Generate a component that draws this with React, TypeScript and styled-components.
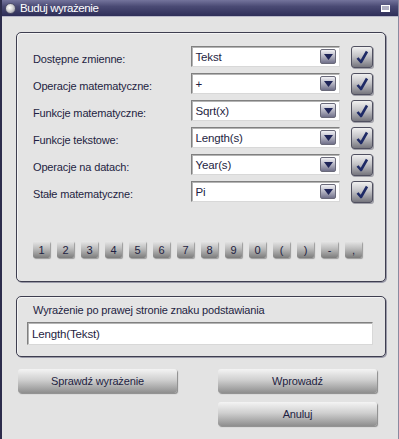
import React from 'react'
import styled, { createGlobalStyle } from 'styled-components'

const GlobalStyle = createGlobalStyle`
  html, body {
    margin: 0;
    padding: 0;
    background: #e3e3e3;
  }
  * {
    box-sizing: border-box;
  }
`

const WindowSC = styled.div`
  width: 399px;
  height: 439px;
  display: flex;
  flex-direction: column;
  background: #e3e3e3;
  border-left: 2px solid #2c2c4c;
  border-right: 1px solid #8a8aa0;
  font-family: 'Liberation Sans', Arial, sans-serif;
  font-size: 11px;
  letter-spacing: -0.15px;
  color: #1e1e42;
  overflow: hidden;
`

const TitleBar = styled.div`
  height: 17px;
  display: flex;
  align-items: center;
  padding: 0 8px 0 3px;
  background: linear-gradient(to bottom, #74749c 0%, #4a4a74 40%, #2e2e58 100%);
  border-bottom: 1px solid #b8b8c8;
  color: #ffffff;
  font-size: 11.5px;
  letter-spacing: -0.4px;
`

const TitleDot = styled.div`
  width: 11px;
  height: 11px;
  border-radius: 50%;
  margin-right: 4px;
  background: radial-gradient(circle at 40% 40%, #ffffff 0%, #d8d8d8 40%, #8a8a9a 100%);
  border: 1px solid #50506a;
`

const TitleText = styled.div`
  flex: 1;
`

const TitleBox = styled.div`
  width: 9px;
  height: 7px;
  border: 1px solid #ffffff;
  border-bottom-width: 2px;
  background: #b0b0c4;
`

const Body = styled.div`
  flex: 1;
  display: flex;
  flex-direction: column;
  padding: 15px 12px 0 14px;
`

const GroupBox = styled.div`
  width: 370px;
  border: 1px solid #3e3e50;
  border-radius: 5px;
  box-shadow: 1px 1px 0 #9a9aa8, inset 1px 1px 0 #f4f4f4;
  background: #e4e4e4;
`

const ExprGroup = styled(GroupBox)`
  margin-top: 14px;
  padding: 5px 12px 11px 10px;
`

const MainGroup = styled(GroupBox)`
  padding: 13px 12px 23px 16px;
`

const Rows = styled.div`
  display: flex;
  flex-direction: column;
  gap: 6px;
`

const Row = styled.div`
  display: flex;
  align-items: center;
  height: 21px;
`

const Label = styled.div`
  width: 158px;
  padding-top: 5px;
`

const Combo = styled.div`
  width: 150px;
  height: 21px;
  display: flex;
  align-items: center;
  background: #ffffff;
  border: 1px solid;
  border-color: #808080 #d8d8d8 #d8d8d8 #808080;
  box-shadow: inset 1px 1px 0 #b4b4b4;
  padding: 0 3px 0 4px;
`

const ComboText = styled.div`
  flex: 1;
  font-size: 11.5px;
`

const ComboButton = styled.div`
  width: 16px;
  height: 15px;
  display: flex;
  align-items: center;
  justify-content: center;
  border: 1px solid #6a6a7a;
  border-radius: 2px;
  background: linear-gradient(to bottom, #f2f2f6 0%, #b4b4c2 50%, #70708a 100%);
`

const CheckButton = styled.div`
  width: 22px;
  height: 22px;
  margin-left: 11px;
  display: flex;
  align-items: center;
  justify-content: center;
  border: 1px solid #505060;
  border-radius: 3px;
  background: linear-gradient(to bottom, #f0f0f0 0%, #c4c4c8 45%, #76767e 100%);
  box-shadow: 1px 1px 0 #a0a0a8;
`

const Keys = styled.div`
  display: flex;
  gap: 7px;
  margin-top: 39px;
`

const Key = styled.div`
  width: 17px;
  height: 17px;
  display: flex;
  align-items: center;
  justify-content: center;
  border-radius: 2px;
  font-size: 11px;
  color: #1e1e42;
  background: linear-gradient(to bottom, #e8e8e8 0%, #bcbcbc 45%, #7c7c7c 100%);
  box-shadow: 1px 1px 1px #9a9a9a;
`

const ExprLabel = styled.div`
  padding-left: 6px;
  height: 16px;
  line-height: 16px;
`

const ExprInput = styled.div`
  margin-top: 4px;
  height: 23px;
  display: flex;
  align-items: center;
  padding-left: 4px;
  font-size: 11.5px;
  background: #ffffff;
  border: 1px solid;
  border-color: #808080 #d8d8d8 #d8d8d8 #808080;
  box-shadow: inset 1px 1px 0 #b4b4b4;
`

const Buttons = styled.div`
  display: grid;
  grid-template-columns: 159px 159px;
  column-gap: 41px;
  row-gap: 9px;
  margin-top: 12px;
  padding-left: 2px;
`

const Button = styled.div<{ $col: number }>`
  grid-column: ${p => p.$col};
  height: 24px;
  display: flex;
  align-items: center;
  justify-content: center;
  border-radius: 3px;
  color: #1e1e42;
  background: linear-gradient(to bottom, #f4f4f4 0%, #d0d0d0 45%, #8e8e8e 100%);
  box-shadow: 1px 1px 1px #8a8a8a;
`

const ArrowIcon = () => (
  <svg width="9" height="6" viewBox="0 0 9 6">
    <path d="M0 0 L9 0 L4.5 6 Z" fill="#1e2458" />
  </svg>
)

const CheckIcon = () => (
  <svg width="16" height="16" viewBox="0 0 16 16">
    <path d="M3.5 9 L7 13 L13 2.5" stroke="#1e2a66" strokeWidth="2.6" fill="none" strokeLinejoin="round" />
  </svg>
)

const rows = [
  ['Dostępne zmienne:', 'Tekst'],
  ['Operacje matematyczne:', '+'],
  ['Funkcje matematyczne:', 'Sqrt(x)'],
  ['Funkcje tekstowe:', 'Length(s)'],
  ['Operacje na datach:', 'Year(s)'],
  ['Stałe matematyczne:', 'Pi'],
]

const keys = ['1', '2', '3', '4', '5', '6', '7', '8', '9', '0', '(', ')', '-', ',']

const App = () => {
  return (
    <>
      <GlobalStyle />
      <WindowSC>
        <TitleBar>
          <TitleDot />
          <TitleText>Buduj wyrażenie</TitleText>
          <TitleBox />
        </TitleBar>
        <Body>
          <MainGroup>
            <Rows>
              {rows.map(([label, value]) => (
                <Row key={label}>
                  <Label>{label}</Label>
                  <Combo>
                    <ComboText>{value}</ComboText>
                    <ComboButton>
                      <ArrowIcon />
                    </ComboButton>
                  </Combo>
                  <CheckButton>
                    <CheckIcon />
                  </CheckButton>
                </Row>
              ))}
            </Rows>
            <Keys>
              {keys.map(k => (
                <Key key={k}>{k}</Key>
              ))}
            </Keys>
          </MainGroup>
          <ExprGroup>
            <ExprLabel>Wyrażenie po prawej stronie znaku podstawiania</ExprLabel>
            <ExprInput>Length(Tekst)</ExprInput>
          </ExprGroup>
          <Buttons>
            <Button $col={1}>Sprawdź wyrażenie</Button>
            <Button $col={2}>Wprowadź</Button>
            <Button $col={2}>Anuluj</Button>
          </Buttons>
        </Body>
      </WindowSC>
    </>
  )
}

export default App
